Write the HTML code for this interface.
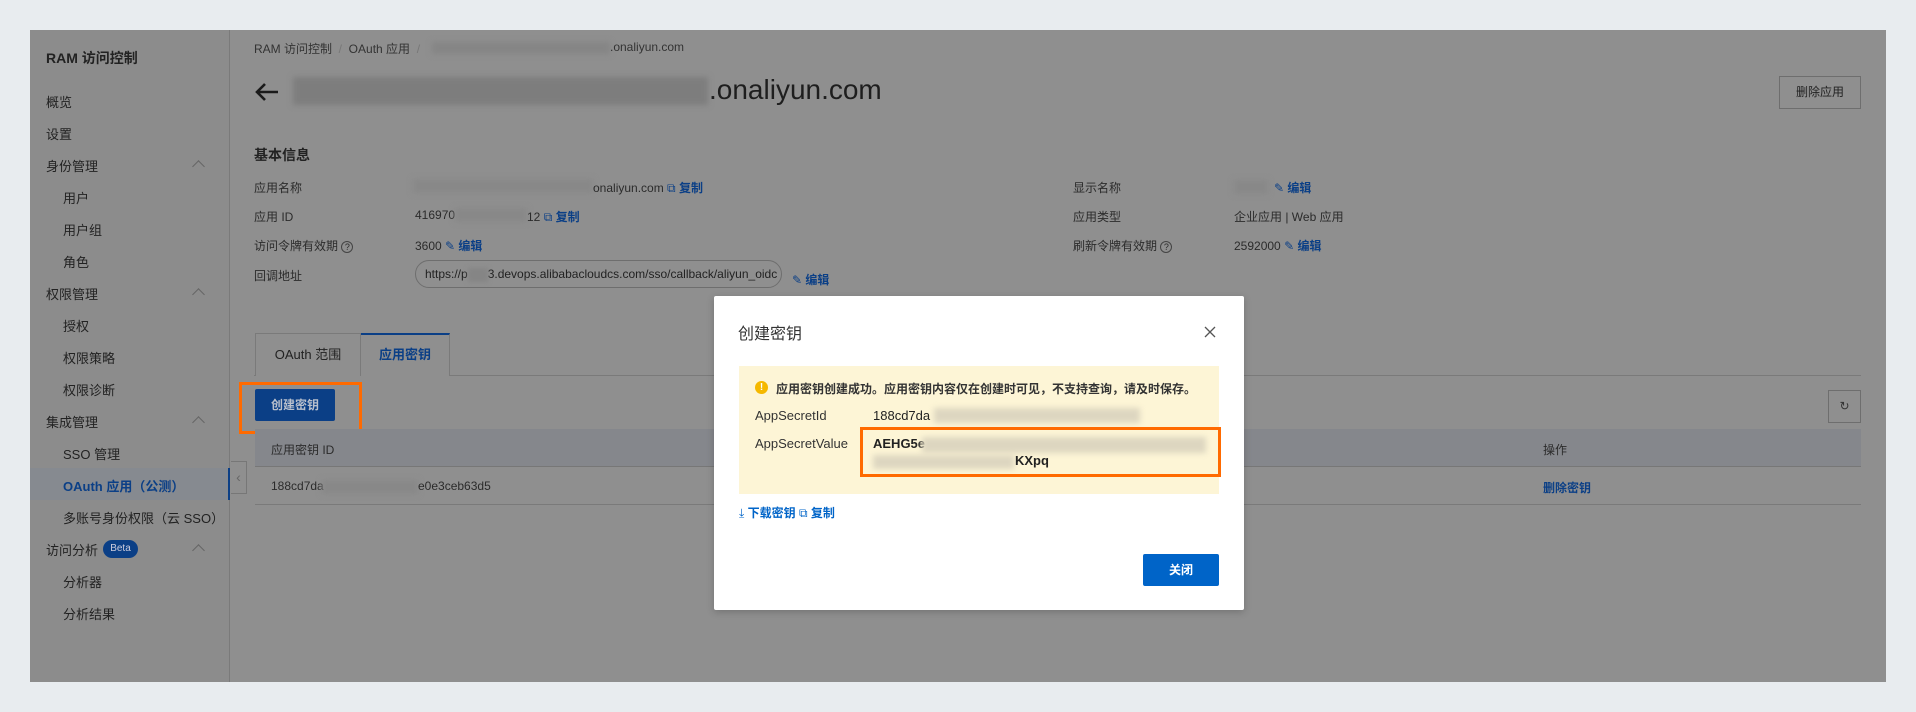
<!DOCTYPE html>
<html><head><meta charset="utf-8"><style>
*{margin:0;padding:0;box-sizing:border-box}
body{width:1916px;height:712px;background:#e8ecef;position:relative;overflow:hidden;font-family:"Liberation Sans","Noto Sans CJK SC",sans-serif;color:#222;font-size:12px}
.a{position:absolute;white-space:nowrap}
.panel{position:absolute;left:30px;top:30px;width:1856px;height:652px;background:#8f8f8f}
.side{position:absolute;left:30px;top:30px;width:200px;height:652px;background:#8c8c8c;border-right:1px solid #7a7a7a}
.m{position:absolute;font-size:13px;color:#222;white-space:nowrap}
.chev{position:absolute;left:194px;width:9px;height:9px;border-left:1.5px solid #666;border-top:1.5px solid #666;transform:rotate(45deg)}
.blue{color:#0b3f86}
.blur{position:absolute;background:#888;filter:blur(3px)}
.lbl{position:absolute;font-size:12px;color:#2b2b2b;white-space:nowrap}
.lbl.blue,.m.blue{color:#0b3f86}
</style></head><body>
<div class="panel"></div>
<div class="side"></div>
<div class="m" style="left:46px;top:48px;font-size:14px;font-weight:bold">RAM 访问控制</div>
<div class="m" style="left:46px;top:92px">概览</div>
<div class="m" style="left:46px;top:124px">设置</div>
<div class="m" style="left:46px;top:156px">身份管理</div><div class="chev" style="top:162px"></div>
<div class="m" style="left:63px;top:188px">用户</div>
<div class="m" style="left:63px;top:220px">用户组</div>
<div class="m" style="left:63px;top:252px">角色</div>
<div class="m" style="left:46px;top:284px">权限管理</div><div class="chev" style="top:290px"></div>
<div class="m" style="left:63px;top:316px">授权</div>
<div class="m" style="left:63px;top:348px">权限策略</div>
<div class="m" style="left:63px;top:380px">权限诊断</div>
<div class="m" style="left:46px;top:412px">集成管理</div><div class="chev" style="top:418px"></div>
<div class="m" style="left:63px;top:444px">SSO 管理</div>
<div style="position:absolute;left:30px;top:468px;width:200px;height:32px;background:#868a90;border-right:2px solid #0b3f86"></div>
<div class="m blue" style="left:63px;top:476px;font-weight:bold">OAuth 应用（公测）</div>
<div class="m" style="left:63px;top:508px">多账号身份权限（云 SSO）</div>
<div class="m" style="left:46px;top:540px">访问分析</div>
<div class="a" style="left:103px;top:540px;width:35px;height:18px;border-radius:9px;background:#0b3f86;color:#ccd;font-size:10px;text-align:center;line-height:18px">Beta</div>
<div class="chev" style="top:546px"></div>
<div class="m" style="left:63px;top:572px">分析器</div>
<div class="m" style="left:63px;top:604px">分析结果</div>
<div class="a" style="left:231px;top:461px;width:16px;height:33px;border:1px solid #777;border-left:none;background:#8f8f8f;color:#666;font-size:14px;line-height:31px;text-align:center">‹</div>

<div class="lbl" style="left:254px;top:40px;color:#333">RAM 访问控制 &nbsp;<span style="color:#777">/</span>&nbsp; OAuth 应用 &nbsp;<span style="color:#777">/</span></div>
<div class="blur" style="left:432px;top:42px;width:178px;height:12px;background:#858585"></div>
<div class="lbl" style="left:610px;top:40px;color:#333">.onaliyun.com</div>
<svg class="a" style="left:254px;top:82px" width="26" height="20" viewBox="0 0 26 20"><path d="M24 10H3M11 2L3 10l8 8" stroke="#1a1a1a" stroke-width="2.6" fill="none"/></svg>
<div class="blur" style="left:293px;top:77px;width:415px;height:28px;background:#7d7d7d"></div>
<div class="a" style="left:709px;top:74px;font-size:28px;color:#1e1e1e">.onaliyun.com</div>
<div class="a" style="left:1779px;top:76px;width:82px;height:33px;border:1px solid #6e6e6e;font-size:12px;line-height:31px;text-align:center;color:#222">删除应用</div>

<div class="a" style="left:254px;top:145px;font-size:14px;font-weight:bold">基本信息</div>
<div class="lbl" style="left:254px;top:179px">应用名称</div>
<div class="lbl" style="left:254px;top:208px">应用 ID</div>
<div class="lbl" style="left:254px;top:237px">访问令牌有效期 <span style="display:inline-block;width:12px;height:12px;border:1px solid #444;border-radius:50%;font-size:9px;text-align:center;line-height:11px">?</span></div>
<div class="lbl" style="left:254px;top:267px">回调地址</div>
<div class="blur" style="left:413px;top:179px;width:180px;height:14px"></div>
<div class="lbl" style="left:593px;top:179px">onaliyun.com <span class="blue">⧉ <b>复制</b></span></div>
<div class="lbl" style="left:415px;top:208px">416970</div>
<div class="blur" style="left:455px;top:208px;width:72px;height:14px"></div>
<div class="lbl" style="left:527px;top:208px">12 <span class="blue">⧉ <b>复制</b></span></div>
<div class="lbl" style="left:415px;top:237px">3600 <span class="blue">✎ <b>编辑</b></span></div>
<div class="a" style="left:415px;top:260px;width:367px;height:28px;border:1px solid #6e6e6e;border-radius:14px;padding-left:9px;line-height:26px;font-size:12px;overflow:hidden">https://p<span style="display:inline-block;width:20px;height:14px;background:#858585;filter:blur(2px);vertical-align:middle"></span>3.devops.alibabacloudcs.com/sso/callback/aliyun_oidc</div>
<div class="lbl blue" style="left:792px;top:271px">✎ <b>编辑</b></div>
<div class="lbl" style="left:1073px;top:179px">显示名称</div>
<div class="lbl" style="left:1073px;top:208px">应用类型</div>
<div class="lbl" style="left:1073px;top:237px">刷新令牌有效期 <span style="display:inline-block;width:12px;height:12px;border:1px solid #444;border-radius:50%;font-size:9px;text-align:center;line-height:11px">?</span></div>
<div class="blur" style="left:1234px;top:180px;width:34px;height:14px"></div>
<div class="lbl blue" style="left:1274px;top:179px">✎ <b>编辑</b></div>
<div class="lbl" style="left:1234px;top:208px">企业应用 | Web 应用</div>
<div class="lbl" style="left:1234px;top:237px">2592000 <span class="blue">✎ <b>编辑</b></span></div>

<div class="a" style="left:254px;top:375px;width:1607px;height:1px;background:#7a7a7a"></div>
<div class="a" style="left:255px;top:333px;width:106px;height:43px;border:1px solid #7a7a7a;border-bottom:none;background:#8f8f8f;font-size:13px;line-height:42px;text-align:center">OAuth 范围</div>
<div class="a" style="left:361px;top:333px;width:89px;height:43px;border-top:2px solid #0b3f86;border-right:1px solid #7a7a7a;background:#8f8f8f;font-size:13px;line-height:40px;text-align:center;color:#0b3f86;font-weight:bold">应用密钥</div>
<div class="a" style="left:255px;top:389px;width:80px;height:32px;background:#0b3f86;border-radius:2px;color:#b9c0cc;font-weight:bold;font-size:12px;line-height:32px;text-align:center">创建密钥</div>
<div class="a" style="left:239px;top:382px;width:123px;height:52px;border:3px solid #ff6a00"></div>
<div class="a" style="left:1828px;top:390px;width:33px;height:33px;border:1px solid #6e6e6e;font-size:12px;line-height:31px;text-align:center;color:#333">↻</div>
<div class="a" style="left:255px;top:429px;width:1606px;height:38px;background:#85878c;border-bottom:1px solid #777"></div>
<div class="lbl" style="left:271px;top:441px">应用密钥 ID</div>
<div class="lbl" style="left:1543px;top:441px">操作</div>
<div class="a" style="left:255px;top:504px;width:1606px;height:1px;background:#7a7a7a"></div>
<div class="lbl" style="left:271px;top:479px">188cd7da</div>
<div class="blur" style="left:322px;top:480px;width:96px;height:14px"></div>
<div class="lbl" style="left:418px;top:479px">e0e3ceb63d5</div>
<div class="lbl blue" style="left:1543px;top:479px;font-weight:bold">删除密钥</div>

<div class="a" style="left:714px;top:296px;width:530px;height:314px;background:#fff;border-radius:2px;box-shadow:0 2px 8px rgba(0,0,0,.2)"></div>
<div class="a" style="left:738px;top:320px;font-size:16px;color:#333">创建密钥</div>
<svg class="a" style="left:1204px;top:326px" width="12" height="12" viewBox="0 0 12 12"><path d="M1 1L11 11M11 1L1 11" stroke="#555" stroke-width="1.3"/></svg>
<div class="a" style="left:739px;top:366px;width:480px;height:128px;background:#fdf5d6"></div>
<div class="a" style="left:755px;top:381px;width:13px;height:13px;border-radius:50%;background:#f5b800;color:#fff;font-size:10px;font-weight:bold;line-height:13px;text-align:center">!</div>
<div class="a" style="left:776px;top:380px;font-size:12px;font-weight:bold;color:#333">应用密钥创建成功。应用密钥内容仅在创建时可见，不支持查询，请及时保存。</div>
<div class="a" style="left:755px;top:408px;font-size:13px;color:#333">AppSecretId</div>
<div class="a" style="left:873px;top:408px;font-size:13px;color:#222">188cd7da</div>
<div class="blur" style="left:934px;top:408px;width:206px;height:15px;background:#ddd6c0"></div>
<div class="a" style="left:755px;top:436px;font-size:13px;color:#333">AppSecretValue</div>
<div class="a" style="left:873px;top:436px;font-size:13px;font-weight:bold;color:#222">AEHG5e</div>
<div class="blur" style="left:922px;top:437px;width:284px;height:16px;background:#ddd6c0"></div>
<div class="blur" style="left:873px;top:455px;width:141px;height:14px;background:#ddd6c0"></div>
<div class="a" style="left:1015px;top:453px;font-size:13px;font-weight:bold;color:#222">KXpq</div>
<div class="a" style="left:860px;top:427px;width:361px;height:50px;border:3px solid #ff6a00"></div>
<div class="a" style="left:739px;top:504px;font-size:12px;color:#0064c8">⤓ <b>下载密钥</b> ⧉ <b>复制</b></div>
<div class="a" style="left:1143px;top:554px;width:76px;height:32px;background:#0064c8;border-radius:2px;color:#fff;font-weight:bold;font-size:12px;line-height:32px;text-align:center">关闭</div>
</body></html>
